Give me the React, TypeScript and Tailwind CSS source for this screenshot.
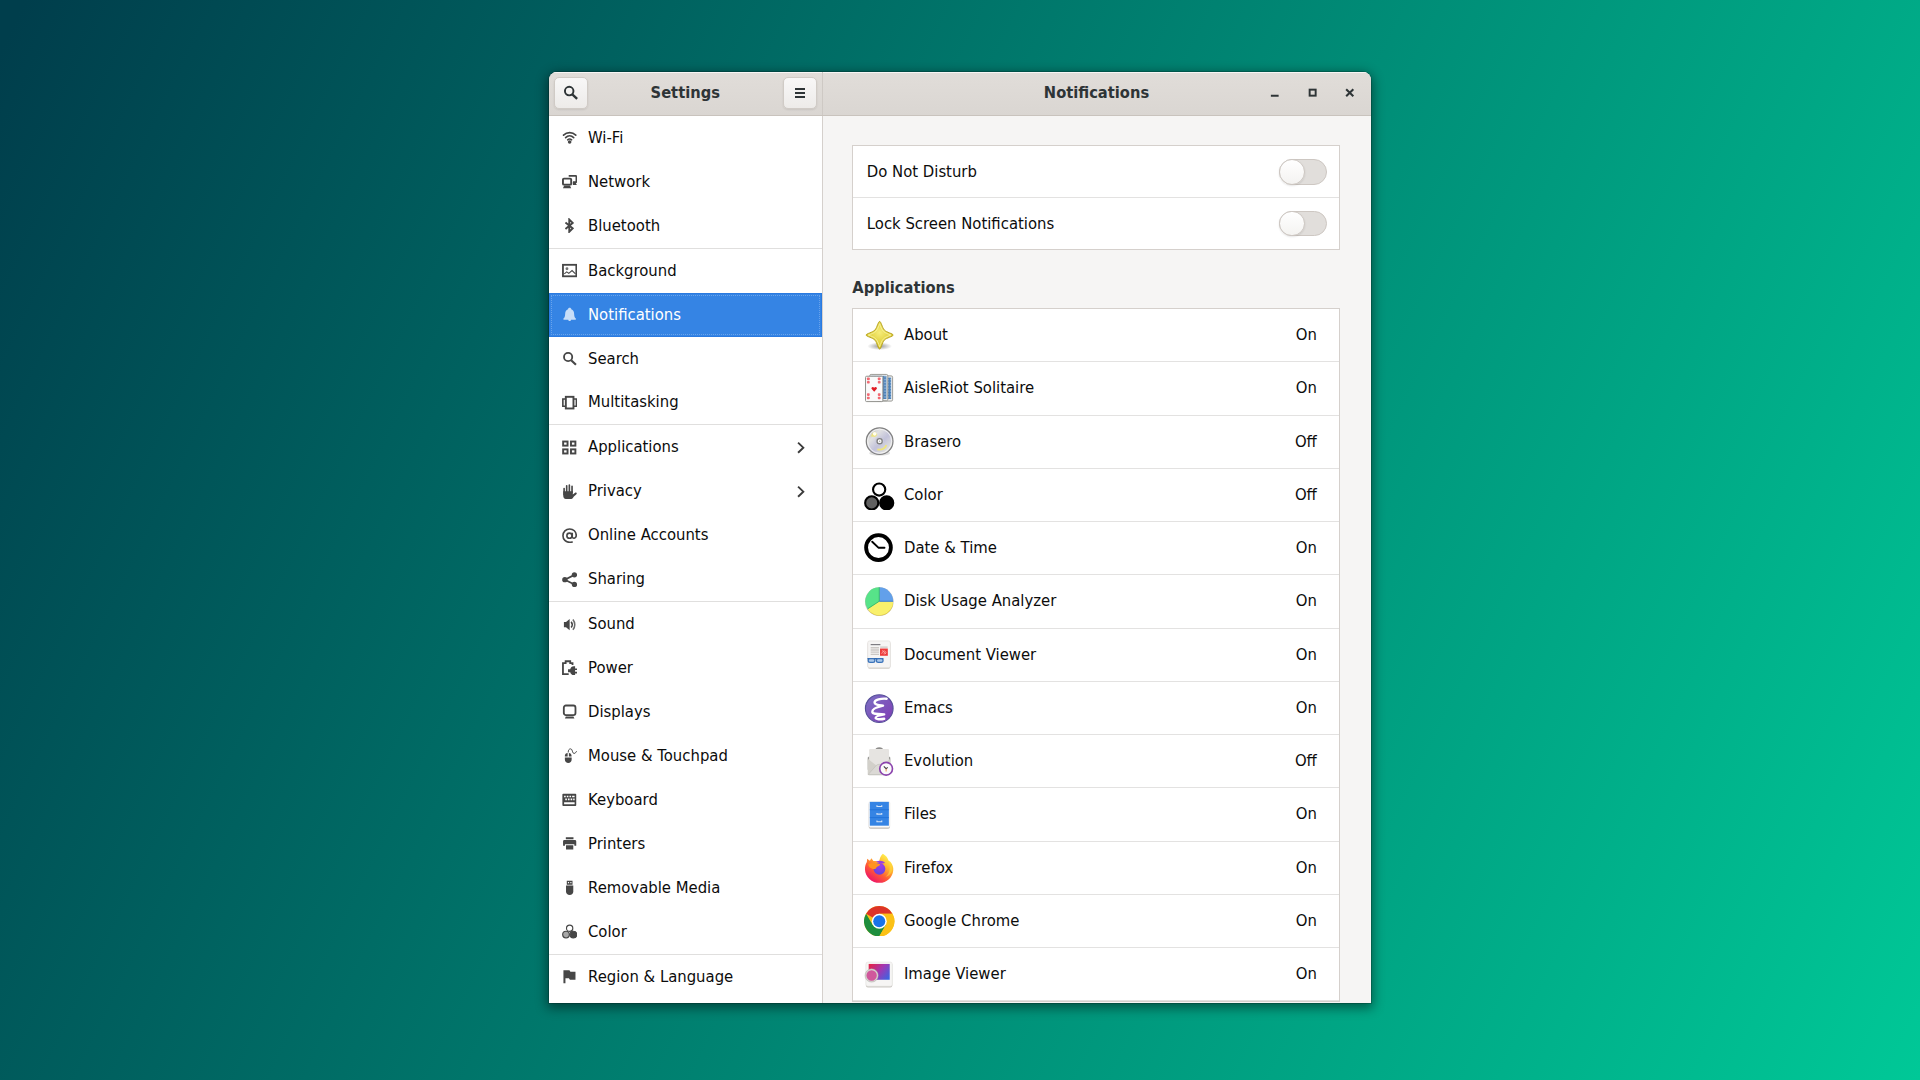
import React from 'react';

const stroke = { fill: 'none', stroke: 'currentColor' } as const;

const sideIcons: Record<string, React.ReactNode> = {
  wifi: (
    <g {...stroke} strokeLinecap="round">
      <path d="M1.600 5.400C5.200 1.900 10.800 1.900 14.400 5.400" strokeWidth="1.800" />
      <path d="M3.800 7.900c2.400-2.200 6-2.200 8.400 0" strokeWidth="1.800" />
      <path d="M5.900 10.300c1.200-1 3-1 4.200 0" strokeWidth="1.600" />
      <circle cx="8" cy="12.600" r="1.900" fill="currentColor" stroke="none" />
    </g>
  ),
  network: (
    <>
      <path d="M7 2h7.100c.6 0 1 .4 1 1v4.500c0 .6-.4 1-1 1h-2.600" {...stroke} strokeWidth="1.900" />
      <path d="M11.300 8.400h2.700l1.500 3h-4.200z" fill="currentColor" />
      <rect x="1" y="4.800" width="8.600" height="6.300" rx="1" {...stroke} strokeWidth="2" />
      <path d="M2.300 12h6l1.300 2.900H1z" fill="currentColor" />
    </>
  ),
  bluetooth: <path d="M3.600 4.600l7.600 6.200-3.600 3.600V1.600l3.600 3.500-7.600 6.300" {...stroke} strokeWidth="2" />,
  background: (
    <>
      <rect x="1" y="1.900" width="14" height="12" {...stroke} strokeWidth="1.900" />
      <circle cx="5.200" cy="6" r="1.500" fill="currentColor" opacity=".75" />
      <path d="M2.400 11.300l2.500-2 2.200 1.600 3.400-3 3.600 3.600" {...stroke} strokeWidth="1.100" />
    </>
  ),
  bell: (
    <path
      d="M8 .9c-1 0-1.600.7-1.700 1.400C4.200 3 3.400 4.900 3.300 7.200c-.1 2.400-.5 3.700-1.700 4.900-.4.400-.3 1.200.4 1.200h4.500c.1.900.7 1.400 1.500 1.400s1.400-.5 1.500-1.400h4.500c.7 0 .8-.8.4-1.200-1.200-1.200-1.600-2.500-1.700-4.900-.1-2.300-.9-4.200-3-4.900C9.600 1.600 9 .9 8 .9z"
      fill="currentColor"
    />
  ),
  search: (
    <>
      <circle cx="6.400" cy="6.300" r="4.300" {...stroke} strokeWidth="1.900" />
      <path d="M9.600 9.600l5 4.800" {...stroke} strokeWidth="2.200" />
    </>
  ),
  multitasking: (
    <>
      <rect x="4" y="1.900" width="8" height="12.200" {...stroke} strokeWidth="2" />
      <path d="M3.600 4.200H.9v7.600h2.700M12.400 4.200h2.700v7.600h-2.700" {...stroke} strokeWidth="1.700" />
    </>
  ),
  applications: (
    <g {...stroke} strokeWidth="2">
      <rect x="1.200" y="1.600" width="4.600" height="4.300" />
      <rect x="9.400" y="1.600" width="4.600" height="4.300" />
      <rect x="1.200" y="9.800" width="4.600" height="4.300" />
      <rect x="9.400" y="9.800" width="4.600" height="4.300" />
    </g>
  ),
  privacy: (
    <>
      <g {...stroke} strokeWidth="1.700" strokeLinecap="round">
        <path d="M2.200 4.700V11M4.900 1.800V9M7.700 1V9M10.500 2.300V9" />
      </g>
      <path
        d="M1.300 7.500h10v3.400l2.400-1.700c.8-.5 2 .1 1.700.9-.5 1.100-2.300 1.700-3.200 3.200-.7 1.300-1.600 2.500-3.400 2.500H5c-2.300 0-3.700-1.500-3.700-3.600z"
        fill="currentColor"
      />
    </>
  ),
  online: (
    <>
      <circle cx="7.800" cy="8" r="2.700" {...stroke} strokeWidth="1.700" />
      <path
        d="M10.700 4.900v4.200c0 2.400 4.200 2.200 4.200-1.300C14.900 3.800 11.900 1 8 1 4.100 1 1 4.100 1 8s3 7 7 7c1.200 0 2.300-.2 3.200-.7"
        {...stroke}
        strokeWidth="1.700"
      />
    </>
  ),
  sharing: (
    <>
      <path d="M13 3L3 8l10 5" {...stroke} strokeWidth="1.800" />
      <circle cx="3" cy="8" r="2.800" fill="currentColor" />
      <circle cx="13" cy="3" r="2.800" fill="currentColor" />
      <circle cx="13" cy="13" r="2.800" fill="currentColor" />
    </>
  ),
  sound: (
    <>
      <path d="M2 5.200h2.200L8 2.200v11.600l-3.800-3H2z" fill="currentColor" />
      <path d="M9.600 5c1.300 1.700 1.300 4.300 0 6" {...stroke} strokeWidth="1.600" />
      <path d="M11.400 2.600c2.600 3.100 2.600 7.700 0 10.800" {...stroke} strokeWidth="1.600" opacity=".8" />
    </>
  ),
  power: (
    <>
      <path d="M11 5.300V3.200H8.600V1.300H3.800v1.900H1v11.500h6" {...stroke} strokeWidth="1.900" />
      <path
        d="M6.300 9.600h2.300c.5-1.700 1.800-3 3.600-3h1.500v2.200h2.100v1.700h-2.100v1.800h2.100V14h-2.100v1.700h-1.500c-1.800 0-3.100-1.200-3.600-3H6.300z"
        fill="currentColor"
      />
    </>
  ),
  displays: (
    <>
      <rect x="1.900" y="1.600" width="12.200" height="10" rx="2.200" {...stroke} strokeWidth="1.900" />
      <path d="M4 13.200h8l1 2H3z" fill="currentColor" />
    </>
  ),
  mouse: (
    <>
      <path d="M3 8c0-1.800 1.200-2.800 2.900-2.900V9H3zM7.200 5.100C8.900 5.200 10 6.200 10 8v1H7.200zM3 9.900h7.100V12c0 2.300-1.500 3.600-3.500 3.600S3 14.300 3 12z" fill="currentColor" />
      <path d="M6.500 4.700C6.500 2 7.500.9 9 .9c2.400 0 1.300 4.800 3.600 4.800 1.500 0 1.900-1.300 2.700-2.400" {...stroke} strokeWidth="1" />
    </>
  ),
  keyboard: (
    <>
      <path
        fillRule="evenodd"
        d="M.4 2.600c0-.6.300-.9.900-.9h12.700c.6 0 .9.300.9.900v11.100c0 .6-.3.900-.9.900H1.300c-.6 0-.9-.3-.9-.9zM2.200 10.700v2h11v-2z"
        fill="currentColor"
      />
      <path
        fill="#fff"
        d="M2.200 3.800h1.700v1.800H2.200zM5 3.800h1.700v1.800H5zM7.800 3.800h1.700v1.800H7.800zM10.600 3.800h2.600v1.800h-2.600zM3.400 6.800h1.700v1.700H3.400zM6.200 6.800h1.700v1.700H6.200zM9 6.800h1.700v1.700H9zM11.700 6.800h1.500v1.700h-1.500z"
      />
    </>
  ),
  printers: (
    <path
      d="M4 1.300h8v2H4zM2.600 4.300h10.800c1 0 1.500.6 1.500 1.500v4.300h-2V8.700H3.100v1.400h-2V5.800c0-.9.500-1.500 1.500-1.500zM4.200 9.700h7.600V14H4.200z"
      fill="currentColor"
    />
  ),
  usb: (
    <>
      <path fillRule="evenodd" d="M5 .9h6v4H5zM6.200 2.200v1.300h1.200V2.200zM8.700 2.200v1.300h1.200V2.200z" fill="currentColor" />
      <path d="M4.200 5.800h7.600V12c0 2.300-1.600 3.600-3.800 3.600S4.200 14.300 4.200 12z" fill="currentColor" />
    </>
  ),
  color: (
    <g stroke="currentColor" strokeWidth="1.200">
      <circle cx="8" cy="4.400" r="3.300" fill="none" />
      <circle cx="4.200" cy="11.100" r="3.500" fill="#a8a8a8" />
      <circle cx="11.900" cy="11.100" r="3.500" fill="currentColor" />
    </g>
  ),
  flag: <path d="M1.500 1.300h6.300l1 1.700h5.300v8.200H8.300L7.200 9.600H3.600v5.200H1.500z" fill="currentColor" />,
};

const sections: [string, string, boolean?][][] = [
  [['wifi', 'Wi-Fi'], ['network', 'Network'], ['bluetooth', 'Bluetooth']],
  [['background', 'Background'], ['bell', 'Notifications'], ['search', 'Search'], ['multitasking', 'Multitasking']],
  [['applications', 'Applications', true], ['privacy', 'Privacy', true], ['online', 'Online Accounts'], ['sharing', 'Sharing']],
  [
    ['sound', 'Sound'], ['power', 'Power'], ['displays', 'Displays'], ['mouse', 'Mouse & Touchpad'],
    ['keyboard', 'Keyboard'], ['printers', 'Printers'], ['usb', 'Removable Media'], ['color', 'Color'],
  ],
  [['flag', 'Region & Language']],
];

const pips = [[4.400, 6], [4.400, 9.500], [15.800, 6], [15.800, 9.500], [4.400, 22.500], [4.400, 26], [15.800, 22.500], [15.800, 26]];

const apps: [string, string, React.ReactNode][] = [
  ['About', 'On', (
    <>
      <defs>
        <radialGradient id="star" cx=".5" cy=".4" r=".5">
          <stop offset="0" stopColor="#f5ec7a" />
          <stop offset="1" stopColor="#dcc92c" />
        </radialGradient>
        <radialGradient id="starShadow">
          <stop offset="0" stopColor="#000" stopOpacity=".4" />
          <stop offset="1" stopColor="#000" stopOpacity="0" />
        </radialGradient>
      </defs>
      <ellipse cx="16.400" cy="27.500" rx="13" ry="4" fill="url(#starShadow)" />
      <path d="M16.400 1.500c1.500 0 2.700 6.500 4.900 9s9.300 3.800 9.300 5.300-7.100 2.900-9.300 5.300-3.400 9.400-4.900 9.400-2.700-6.900-4.900-9.400-9.300-3.800-9.300-5.300 7.100-2.800 9.300-5.300 3.400-9 4.900-9z" fill="url(#star)" stroke="#b3a01d" strokeWidth="1" />
      <path d="M16.400 3.800c1 3.200 2.200 6.400 4 8.100s4.800 2.900 8 3.900c-3.200 1-6.300 2.200-8 4s-3 5.200-4 8.300c-1-3.100-2.200-6.500-4-8.300s-4.800-3-8-4c3.200-1 6.300-2.200 8-3.900s3-4.900 4-8.100z" fill="none" stroke="#f8f2a0" strokeWidth=".9" />
    </>
  )],
  ['AisleRiot Solitaire', 'On', (
    <>
      <defs>
        <pattern id="cardBack" width="1.600" height="1.600" patternUnits="userSpaceOnUse">
          <rect width="1.600" height="1.600" fill="#4a7fb8" />
          <rect width=".8" height=".8" fill="#9fc0de" />
        </pattern>
      </defs>
      <rect x="13" y="3" width="17" height="26.500" rx="1.500" fill="#eee" stroke="#8d8d88" strokeWidth=".9" />
      <rect x="21" y="4.800" width="7.500" height="22.500" fill="url(#cardBack)" />
      <rect x="6" y="1.500" width="19" height="27.600" rx="1.500" fill="#eee" stroke="#8d8d88" strokeWidth=".9" />
      <rect x="7.500" y="3" width="16" height="24.300" fill="url(#cardBack)" />
      <rect x="1.600" y="3.400" width="18.200" height="26.600" rx="1.200" fill="#fafafa" stroke="#8d8d88" strokeWidth="1" />
      {pips.map(([x, y]) => (
        <rect key={x + '-' + y} x={x - 1.3} y={y - 1.2} width="2.900" height="2.700" rx=".8" fill="#f0505a" opacity=".85" />
      ))}
      <path d="M10.700 19.600l-2.600-2.700c-1.100-1.600 1.100-3.300 2.600-1.500 1.500-1.800 3.700-.1 2.600 1.500z" fill="#e01b24" />
    </>
  )],
  ['Brasero', 'Off', (
    <>
      <defs>
        <linearGradient id="disc" x1="0" y1="0" x2="1" y2="1">
          <stop offset="0" stopColor="#b0b0b0" />
          <stop offset=".3" stopColor="#e2e2e2" />
          <stop offset=".55" stopColor="#c2c2da" />
          <stop offset=".8" stopColor="#dedede" />
          <stop offset="1" stopColor="#b0b0b0" />
        </linearGradient>
      </defs>
      <ellipse cx="16.400" cy="28.500" rx="11" ry="2.800" fill="#000" opacity=".12" />
      <circle cx="16.400" cy="15.900" r="14" fill="url(#disc)" stroke="#808080" strokeWidth="1.300" />
      <circle cx="16.400" cy="15.900" r="12.600" fill="none" stroke="#f6f6f6" strokeWidth=".9" />
      <path d="M7 11c1-3 2.400-4.300 5-5l2 3.500-2.500 2z" fill="#f0e56e" opacity=".8" />
      <path d="M14 24.500c4.500.8 8-1 9.500-4.500" fill="none" stroke="#efe47c" strokeWidth="1.800" />
      <circle cx="11.200" cy="8.200" r="1.900" fill="#fffef0" />
      <circle cx="16.400" cy="15.900" r="4.700" fill="#cacadc" opacity=".8" />
      <circle cx="16.400" cy="15.900" r="2.700" fill="#fff" stroke="#808080" strokeWidth="1.400" />
      <circle cx="16.400" cy="15.900" r=".8" fill="#aaa" />
    </>
  )],
  ['Color', 'Off', (
    <g stroke="#000" strokeWidth="2.200">
      <circle cx="15.900" cy="10" r="6.400" fill="#fff" />
      <circle cx="8.100" cy="24" r="6.900" fill="#606060" />
      <circle cx="23.800" cy="24" r="6.900" fill="#000" />
    </g>
  )],
  ['Date & Time', 'On', (
    <>
      <circle cx="15.200" cy="15.300" r="13" fill="#fff" stroke="#000" strokeWidth="4" />
      <path d="M8.600 9.200l6.500 6.200h6.400" fill="none" stroke="#000" strokeWidth="2" strokeLinecap="round" strokeLinejoin="round" />
    </>
  )],
  ['Disk Usage Analyzer', 'On', (
    <>
      <circle cx="16" cy="16.400" r="15" fill="#c9c5bd" />
      <path d="M3.800 24.500a14.600 14.600 0 0 0 26.900-7z" fill="#e0c83f" />
      <path d="M16 16L3.800 24A14.600 14.600 0 0 0 30.600 16z" fill="#f9f06b" />
      <path d="M16 16V1.400A14.600 14.600 0 0 0 3.800 24z" fill="#57e389" />
      <path d="M16 16V1.400A14.600 14.600 0 0 1 30.600 16z" fill="#62a0ea" />
      <path d="M3.800 24L16 16V1.400" fill="none" stroke="#2eb765" strokeWidth=".9" />
      <path d="M16 16h14.600" stroke="#3479d0" strokeWidth="1" />
    </>
  )],
  ['Document Viewer', 'On', (
    <>
      <rect x="3.900" y="3" width="23.800" height="28.200" rx="2" fill="#cfcbc5" />
      <rect x="3.900" y="2" width="23.800" height="28.200" rx="2" fill="#f6f5f4" stroke="#dedad5" strokeWidth=".6" />
      <path d="M7 5.900h10.200" stroke="#77767b" strokeWidth="1.200" />
      <path d="M7 9.200h8.700M7 11.500h8.700M7 13.800h8.700M7 16.100h8.700M17 8.500h7.800" stroke="#cbc8c4" strokeWidth="1.400" />
      <rect x="16.800" y="10" width="8.200" height="7.600" fill="#ed3b3b" />
      <path d="M18.500 15.500c1.500-3 2.500-3.500 4-2.500s0 3-2 2.500M19 12l4 3.500" fill="none" stroke="#ffb9b5" strokeWidth=".8" />
      <path d="M3.600 20.700h16.800" stroke="#2f67ad" strokeWidth="1.500" />
      <rect x="4.400" y="20.500" width="7" height="4" rx="2" fill="#aac8ea" stroke="#3b73b9" strokeWidth="1.300" />
      <rect x="13" y="20.500" width="7" height="4" rx="2" fill="#aac8ea" stroke="#3b73b9" strokeWidth="1.300" />
    </>
  )],
  ['Emacs', 'On', (
    <>
      <defs>
        <linearGradient id="emacs" x1="0" y1="0" x2="1" y2="1">
          <stop offset="0" stopColor="#7c72c4" />
          <stop offset="1" stopColor="#7f3bb4" />
        </linearGradient>
      </defs>
      <circle cx="16" cy="16.300" r="14.500" fill="url(#emacs)" stroke="#57509a" strokeWidth="1.200" />
      <path
        d="M23.800 6c-5.500-.6-13 1-12.700 4.100.2 2.600 4.800 2.700 8.900 3.200-5.500 1.200-11.500 3.600-11.300 6.500.2 2.500 6 2.300 12.500 2.600-4.500.9-9.200 2-9 3.700.2 1.500 5 1.900 9 .9"
        fill="none"
        stroke="#fff"
        strokeWidth="2.500"
        strokeLinecap="round"
        strokeLinejoin="round"
      />
    </>
  )],
  ['Evolution', 'Off', (
    <>
      <path d="M11.500 4.500c.5-2.100 2-3.100 4.500-3.100s4 1 4.500 3.100z" fill="#8e8d8b" />
      <path d="M3.900 12l2-1.500V25h-2zM27.600 12l-2-1.500V20h2z" fill="#9a9996" />
      <path d="M5.400 4.500c0-.8.500-1.300 1.300-1.300h18.200c.8 0 1.300.5 1.300 1.300V24H5.400z" fill="#e6e4e1" />
      <path d="M3.900 13.500l11.900 9 11.800-9v15.700c0 .9-.5 1.400-1.400 1.400H5.300c-.9 0-1.400-.5-1.400-1.400z" fill="#d2d0ca" />
      <path d="M4.300 30l8.500-9.500c1.700-1.800 4.400-1.800 6 0L27 30z" fill="#dbd9d5" stroke="#bdbab5" strokeWidth=".6" />
      <circle cx="23.200" cy="23.900" r="6.700" fill="#fafafa" stroke="#8b43ad" strokeWidth="1.700" />
      <path d="M20.800 21.400l2.400 2.400 1.700-1.300" fill="none" stroke="#3d3846" strokeWidth="1.100" />
      <path d="M23.200 23.800v3" stroke="#e66100" strokeWidth=".7" />
    </>
  )],
  ['Files', 'On', (
    <>
      <rect x="5" y="3.500" width="22.200" height="27.700" rx="1.800" fill="#bfbbb5" />
      <rect x="5" y="3" width="22.200" height="26.900" rx="1.500" fill="#fafafa" stroke="#e0ddd9" strokeWidth=".4" />
      <rect x="6.100" y="3" width="20" height="25" fill="#3584e4" />
      <path d="M6.100 11.300h20M6.100 19.500h20" stroke="#1c6fd6" strokeWidth=".8" />
      <path d="M13.600 6.600v1.300h5V6.600M13.600 14.600v1.300h5v-1.300M13.600 22.600v1.300h5v-1.300" fill="none" stroke="#d3e2f5" strokeWidth="1.200" />
    </>
  )],
  ['Firefox', 'On', (
    <>
      <defs>
        <linearGradient id="fox" x1=".85" y1=".1" x2=".25" y2=".95">
          <stop offset="0" stopColor="#fff44f" />
          <stop offset=".35" stopColor="#ffb02e" />
          <stop offset=".65" stopColor="#ff5a36" />
          <stop offset="1" stopColor="#ee1567" />
        </linearGradient>
        <radialGradient id="globe" cx=".6" cy=".2" r=".9">
          <stop offset="0" stopColor="#a13de8" />
          <stop offset="1" stopColor="#5b45dc" />
        </radialGradient>
      </defs>
      <path
        d="M19.800.8c3.200 1.800 5.200 4.400 6 7.200 1.500.6 2.300 1.400 3 2.700 1.500 2.400 2.200 4.900 1.900 7.600-.6 7.300-6.800 13-14.400 13C8.200 31.300 1.300 25 1 17.200c-.1-3 .8-5.800 2-7.700l.3-3.500 2.900 2.200 1.500-2.700 2.200 3c2-.4 4 .1 5.200 1l.9-.5C16.200 6.600 17.200 3 19.800.8z"
        fill="url(#fox)"
      />
      <circle cx="16.200" cy="16.600" r="6.200" fill="url(#globe)" />
      <path d="M4.500 12c3-2.500 6.500-2.200 8.800-.8 1.400.1 3-.1 3.700.5-.4 1.700-2.400 2.200-3.700 2.900-.5 2-2.400 2.600-4 2.100-2.300-.7-4.500-2-4.800-4.700z" fill="#ff9420" />
      <path d="M12.500 9.300c3-2 7.600-1.500 9.600 1.200l-3.800.8z" fill="#9a3fe0" />
      <path d="M25.500 9c2.700 6 1.800 12.700-3 16.200 3.200-.6 6.200-3.500 7-7 .5-3.600-1-7.300-4-9.200z" fill="#ffd83a" opacity=".6" />
    </>
  )],
  ['Google Chrome', 'On', (
    <>
      <circle cx="16" cy="16" r="15.900" fill="#fbc116" />
      <path d="M16 16L2.230 8.050A15.900 15.900 0 0 1 29.770 8.050H16z" fill="#dd3328" />
      <path d="M2.230 8.050A15.900 15.900 0 0 0 16 31.900l6.900-11.900L16 16l-6.900 4z" fill="#1e8e3e" />
      <path d="M22.900 20L16 31.900A15.900 15.900 0 0 0 29.770 8.050H16z" fill="#fbc116" />
      <circle cx="16" cy="16" r="7.900" fill="#fff" />
      <circle cx="16" cy="16" r="6.300" fill="#1a73e8" />
    </>
  )],
  ['Image Viewer', 'On', (
    <>
      <defs>
        <linearGradient id="photo" x1="0" y1=".2" x2="1" y2=".8">
          <stop offset="0" stopColor="#e0234c" />
          <stop offset=".5" stopColor="#a137b4" />
          <stop offset="1" stopColor="#3f63e0" />
        </linearGradient>
      </defs>
      <rect x="2" y="4" width="27.700" height="25.800" rx="2" fill="#cbc8c4" />
      <rect x="2" y="3.200" width="27.700" height="25.400" rx="2" fill="#f6f5f4" stroke="#e0ddd9" strokeWidth=".5" />
      <rect x="4.900" y="5.200" width="22.100" height="16.600" fill="url(#photo)" />
      <circle cx="8" cy="17.300" r="6.200" fill="#d0589c" stroke="#d6d3cf" strokeWidth="1.500" />
      <circle cx="8" cy="17.300" r="7" fill="none" stroke="#a5a29e" strokeWidth=".4" />
    </>
  )],
];

function Label({ children }: { children: React.ReactNode }) {
  return <span className="inline-block origin-[50%_72%] scale-y-[1.06] whitespace-nowrap">{children}</span>;
}

function Switch() {
  return (
    <div className="h-[25.500px] w-[47.500px] rounded-full border border-[#cdc7c2] bg-[#e1dedb]">
      <div className="-ml-px -mt-px h-[25.500px] w-[25.500px] rounded-full border border-[#cdc7c2] bg-linear-to-b from-white to-[#f4f3f1] shadow-[0_1px_2px_rgba(0,0,0,0.1)]" />
    </div>
  );
}

function HeaderButton({ children }: { children: React.ReactNode }) {
  return (
    <button className="flex h-[32px] w-[34px] items-center justify-center rounded-[5px] border border-[#d0cbc6] bg-linear-to-b from-[#f8f7f7] to-[#edebe9] shadow-[0_1px_2px_rgba(0,0,0,0.09)]">
      {children}
    </button>
  );
}

export default function App() {
  return (
    <div className="h-[1080px] w-[1920px] overflow-hidden bg-[linear-gradient(116deg,#003e4c_1%,#00c897_100%)] pl-[549px] pt-[72px] font-['DejaVu_Sans',sans-serif] text-[14.870px] leading-[20px] text-[#0c0c0c]">
      <div className="flex h-[930.500px] w-[822px] flex-col overflow-hidden rounded-t-[8px] bg-[#f6f5f4] shadow-[0_0_0_1px_rgba(0,0,0,0.18),0_3px_12px_2px_rgba(0,0,0,0.45)]">
        <header className="flex h-[43.900px] shrink-0 border-b border-b-[#c9c3bd] bg-linear-to-b from-[#e1ddd9] to-[#dad6d2] text-[14.700px] font-bold text-[#2e3436] shadow-[inset_0_1px_0_#f7f6f5]">
          <div className="flex w-[274px] items-center justify-between border-r border-r-[#cec9c4] pb-[0.600px] pl-[5px] pr-[5.500px]">
            <HeaderButton>
              <svg viewBox="0 0 16 16" className="h-[15.500px] w-[15.500px]">
                <circle cx="6.400" cy="6.300" r="4.400" {...stroke} strokeWidth="2" />
                <path d="M9.600 9.600l5 4.800" {...stroke} strokeWidth="2.400" />
              </svg>
            </HeaderButton>
            <Label>Settings</Label>
            <HeaderButton>
              <svg viewBox="0 0 16 16" className="h-[16px] w-[16px]">
                <path d="M3 4h10M3 8h10M3 12h10" {...stroke} strokeWidth="2" />
              </svg>
            </HeaderButton>
          </div>
          <div className="grid flex-1 grid-cols-[1fr_auto_1fr] items-center pb-[0.600px]">
            <span />
            <span className="-ml-px">
              <Label>Notifications</Label>
            </span>
            <div className="flex items-center justify-end gap-[22px] pr-[13.500px]">
              <svg viewBox="0 0 16 16" className="h-[15.500px] w-[15.500px]">
                <path d="M4 11h8" {...stroke} strokeWidth="2" />
              </svg>
              <svg viewBox="0 0 16 16" className="h-[15.500px] w-[15.500px]">
                <rect x="4.800" y="4.800" width="6.200" height="6.200" {...stroke} strokeWidth="2" />
              </svg>
              <svg viewBox="0 0 16 16" className="h-[15.500px] w-[15.500px]">
                <path d="M4.300 4.300l7.400 7.400M11.700 4.300l-7.400 7.400" {...stroke} strokeWidth="2.100" />
              </svg>
            </div>
          </div>
        </header>

        <div className="flex min-h-0 flex-1">
          <nav className="w-[274px] shrink-0 overflow-hidden border-r border-r-[#d5d0cc] bg-white">
            {sections.map((rows, i) => (
              <div key={i} className={i ? 'border-t border-t-[#e0dfde]' : ''}>
                {rows.map(([icon, label, more]) => {
                  const active = icon === 'bell';
                  return (
                    <div
                      key={label}
                      className={
                        'relative flex h-[43.940px] items-center pl-[12.500px] pr-[13.500px] ' +
                        (active ? 'bg-[#3584e4] text-white shadow-[inset_0_0_0_1px_#2a7ae0]' : '')
                      }
                    >
                      {active && <span className="absolute inset-[2px] rounded-[1px] border border-dotted border-[#68a3ec]" />}
                      <svg
                        viewBox="0 0 16 16"
                        className={'mr-[11.200px] h-[15.300px] w-[15.300px] shrink-0 ' + (active ? 'text-[#c8def8]' : 'text-[#464646]')}
                      >
                        {sideIcons[icon]}
                      </svg>
                      <span className="flex-1">
                        <Label>{label}</Label>
                      </span>
                      {more && (
                        <svg viewBox="0 0 16 16" className="h-[15.300px] w-[15.300px] text-[#3c3c3c]">
                          <path d="M5.300 2.700L10.800 8l-5.500 5.300" {...stroke} strokeWidth="2" />
                        </svg>
                      )}
                    </div>
                  );
                })}
              </div>
            ))}
          </nav>

          <main className="flex-1 overflow-hidden pl-[29.300px] pr-[30.700px] pt-[29.400px]">
            <section className="border border-[#d5d0cc] bg-white">
              <div className="flex h-[52px] items-center justify-between border-b border-b-[#e3e2e1] pl-[13.500px] pr-[12.500px]">
                <Label>Do Not Disturb</Label>
                <Switch />
              </div>
              <div className="flex h-[50.500px] items-center justify-between pl-[13.500px] pr-[12.500px]">
                <Label>Lock Screen Notifications</Label>
                <Switch />
              </div>
            </section>
            <h2 className="mt-[28.500px] text-[14.700px] font-bold text-[#2e3436]">
              <Label>Applications</Label>
            </h2>
            <section className="mt-[9.700px] border border-[#d5d0cc] bg-white">
              {apps.map(([name, state, icon]) => (
                <div key={name} className="flex h-[53.280px] items-center border-b border-b-[#e3e2e1] pl-[11px] pr-[22.500px]">
                  <svg viewBox="0 0 32 32" className="mr-[9.200px] h-[30.500px] w-[30.500px] shrink-0">
                    {icon}
                  </svg>
                  <span className="flex-1">
                    <Label>{name}</Label>
                  </span>
                  <Label>{state}</Label>
                </div>
              ))}
            </section>
          </main>
        </div>
      </div>
    </div>
  );
}
